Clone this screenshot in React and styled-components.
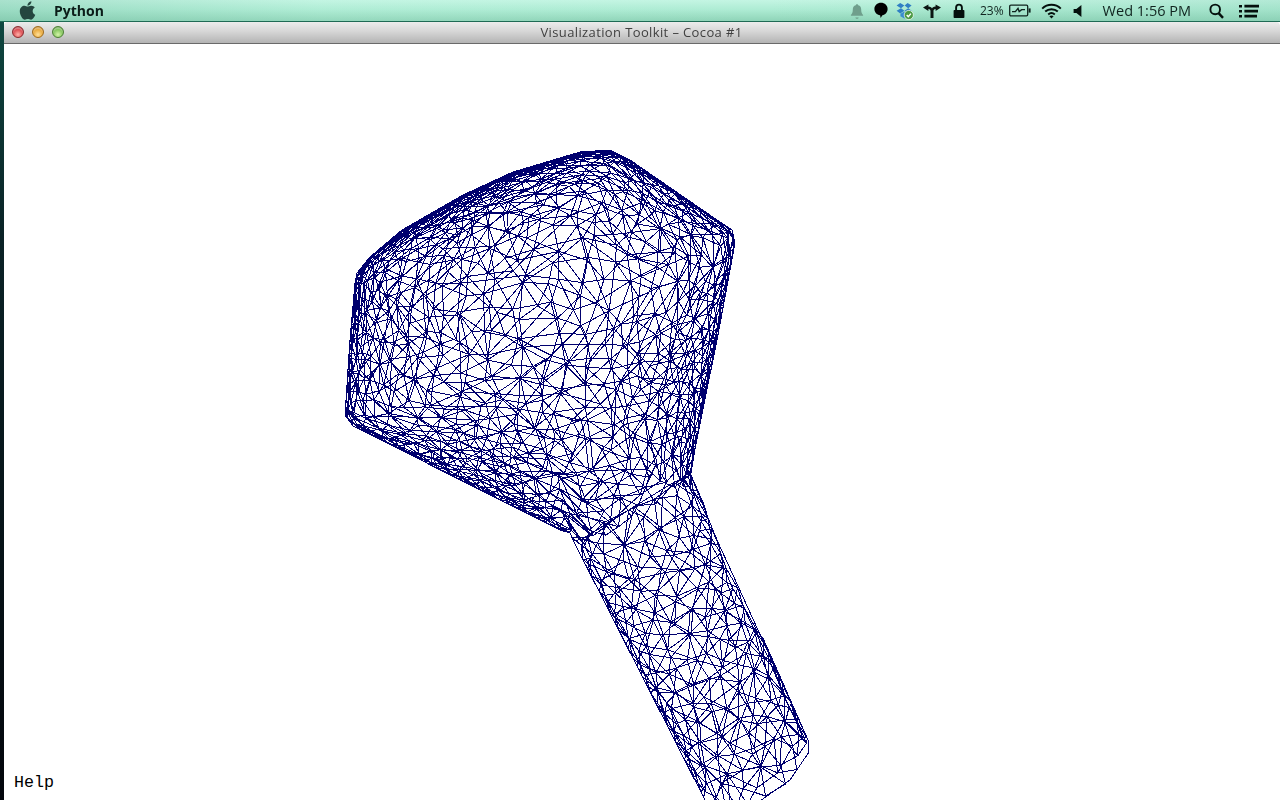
import React, { useMemo } from 'react';
import styled, { createGlobalStyle } from 'styled-components';
import { FaApple } from 'react-icons/fa';

const Global = createGlobalStyle`
  html, body { margin: 0; padding: 0; height: 100%; overflow: hidden; background: #000; }
  #root { height: 100%; }
`;

const Desktop = styled.div`
  width: 1280px; height: 800px; display: flex; flex-direction: column;
  background: linear-gradient(180deg, #0f4a42 0%, #0a2226 30%, #03060c 100%);
  overflow: hidden;
`;

const MenuBar = styled.header`
  flex: 0 0 22px; height: 22px; box-sizing: border-box; display: flex; align-items: center;
  background:
    linear-gradient(90deg, rgba(120,190,165,.35) 0%, rgba(190,245,225,.1) 25%, rgba(190,245,225,0) 60%, rgba(130,200,175,.25) 100%),
    linear-gradient(180deg, #c4f5e3 0%, #aeeCd4 45%, #8fd4b8 100%);
  border-bottom: 1px solid #1f6a55;
  color: #0c1f1a;
`;

const AppleMark = styled.span`
  display: flex; margin-left: 17px; color: #24463f; font-size: 21px; filter: blur(.3px);
`;

const AppName = styled.strong`
  margin-left: 16px; font: 700 14px/21px "Open Sans", sans-serif; color: #0b1c18; filter: blur(.25px);
`;

const Tray = styled.div`
  margin-left: auto; padding-right: 21px; display: flex; align-items: center; height: 21px; filter: blur(.25px);
`;

const TrayIcon = styled.svg`
  display: block; flex: none; margin-left: ${p => p.$gap || 0}px;
`;

const TrayText = styled.span`
  display: block; flex: none; margin-left: ${p => p.$gap || 0}px;
  font: 400 ${p => p.$size}px/21px "Open Sans", sans-serif; color: #10241f; white-space: nowrap;
`;

const Window = styled.main`
  flex: 1; min-height: 0; margin-left: 4px; display: flex; flex-direction: column; background: #fff;
`;

const TitleBar = styled.div`
  flex: 0 0 22px; box-sizing: border-box; position: relative; display: flex; align-items: center; justify-content: center;
  background: linear-gradient(180deg, #ececec 0%, #d6d6d6 45%, #b4b4b4 100%);
  border-bottom: 1px solid #6a6a6a; border-radius: 4px 4px 0 0;
`;

const Lights = styled.div`
  position: absolute; left: 8px; top: 4px; display: flex; gap: 8px;
`;

const Light = styled.span`
  width: 12px; height: 12px; border-radius: 50%; box-sizing: border-box;
  border: 1px solid ${p => p.$rim};
  background: radial-gradient(circle at 50% 75%, ${p => p.$glow} 0%, ${p => p.$base} 60%, ${p => p.$rim} 100%);
  box-shadow: inset 0 2px 1px rgba(255,255,255,.35);
`;

const Title = styled.span`
  margin-left: -1px; font: 400 13px/21px "Open Sans", sans-serif; color: #404040; letter-spacing: .38px; filter: blur(.2px);
`;

const Canvas = styled.div`
  flex: 1; min-height: 0; position: relative; background: #fff; overflow: hidden;
`;

const MeshSvg = styled.svg`
  display: block; width: 1276px; height: 756px;
`;

const Help = styled.span`
  position: absolute; left: 10px; bottom: 8px;
  font: 400 16.66px/18px "Liberation Mono", monospace; color: #000;
`;

const OUTLINE = [
  [610,150],[630,160],[717,220],[732,230],[735,243],[717,340],[690,473],[717,540],[808,740],[809,752],[790,780],[757,803],[730,812],[705,800],
  [573,540],[570,533],[560,530],[353,426],[345,415],[350,340],[355,283],[357,273],[370,257],[402,230],[463,195],[513,172],[580,152],
];

// The head as seen from its pole; the neck is pushed out into the handle so no ring of points crosses it.
const HEAD = [
  [610,150],[630,160],[717,220],[732,230],[735,243],[717,340],[690,473],[700,540],[640,590],[590,570],[570,533],[560,530],[353,426],[345,415],[350,340],[355,283],[357,273],[370,257],[402,230],[463,195],[513,172],[580,152],
];

function mulberry(a) {
  return () => {
    a |= 0; a = (a + 0x6d2b79f5) | 0;
    let t = Math.imul(a ^ (a >>> 15), 1 | a);
    t = (t + Math.imul(t ^ (t >>> 7), 61 | t)) ^ t;
    return ((t ^ (t >>> 14)) >>> 0) / 4294967296;
  };
}

function inside(x, y) {
  let c = false;
  for (let i = 0, j = OUTLINE.length - 1; i < OUTLINE.length; j = i++) {
    const [xi, yi] = OUTLINE[i], [xj, yj] = OUTLINE[j];
    if (yi > y !== yj > y && x < ((xj - xi) * (y - yi)) / (yj - yi) + xi) c = !c;
  }
  return c;
}

function edgeDist(x, y) {
  let best = 1e9;
  for (let i = 0, j = OUTLINE.length - 1; i < OUTLINE.length; j = i++) {
    const [ax, ay] = OUTLINE[j], [bx, by] = OUTLINE[i];
    const dx = bx - ax, dy = by - ay;
    const t = Math.max(0, Math.min(1, ((x - ax) * dx + (y - ay) * dy) / (dx * dx + dy * dy)));
    best = Math.min(best, Math.hypot(x - ax - t * dx, y - ay - t * dy));
  }
  return best;
}

const onShape = (p) => inside(p[0], p[1]) || edgeDist(p[0], p[1]) < 1.2;

// Past this line (through the neck, slightly into the handle) the head mesh stops.
const pastNeck = ([x, y]) => (x - 573) * (473 - 540) - (y - 540) * (690 - 573) < -1800;

// Bowyer-Watson; expects points spread over a few hundred units.
function delaunayEdges(pts) {
  const P = pts.concat([[-20000, -20000], [30000, -20000], [500, 40000]]);
  const n = pts.length;
  const circ = (a, b, c) => {
    const [ax, ay] = P[a], [bx, by] = P[b], [cx, cy] = P[c];
    const d = 2 * (ax * (by - cy) + bx * (cy - ay) + cx * (ay - by));
    const A = ax * ax + ay * ay, B = bx * bx + by * by, C = cx * cx + cy * cy;
    const ux = (A * (by - cy) + B * (cy - ay) + C * (ay - by)) / d;
    const uy = (A * (cx - bx) + B * (ax - cx) + C * (bx - ax)) / d;
    return { a, b, c, ux, uy, r2: (ax - ux) ** 2 + (ay - uy) ** 2 };
  };
  let tris = [circ(n, n + 1, n + 2)];
  for (let i = 0; i < n; i++) {
    const [x, y] = P[i];
    const keep = [], edges = new Map();
    for (const t of tris) {
      if ((x - t.ux) ** 2 + (y - t.uy) ** 2 < t.r2) {
        for (const [u, v] of [[t.a, t.b], [t.b, t.c], [t.c, t.a]]) {
          const k = u < v ? `${u}_${v}` : `${v}_${u}`;
          if (edges.has(k)) edges.set(k, null); else edges.set(k, [u, v]);
        }
      } else keep.push(t);
    }
    for (const e of edges.values()) if (e) keep.push(circ(e[0], e[1], i));
    tris = keep;
  }
  const out = new Map();
  for (const t of tris) {
    if (t.a >= n || t.b >= n || t.c >= n) continue;
    for (const [u, v] of [[t.a, t.b], [t.b, t.c], [t.c, t.a]]) out.set(u < v ? `${u}_${v}` : `${v}_${u}`, [u, v]);
  }
  return [...out.values()];
}

function rayRadius(cx, cy, th) {
  const dx = Math.cos(th), dy = Math.sin(th);
  let best = 1e9;
  for (let i = 0; i < HEAD.length; i++) {
    const a = HEAD[i], b = HEAD[(i + 1) % HEAD.length];
    const ex = b[0] - a[0], ey = b[1] - a[1];
    const den = dx * ey - dy * ex;
    if (Math.abs(den) < 1e-9) continue;
    const t = ((a[0] - cx) * ey - (a[1] - cy) * ex) / den;
    const s = ((a[0] - cx) * dy - (a[1] - cy) * dx) / den;
    if (t > 0 && s >= 0 && s <= 1) best = Math.min(best, t);
  }
  return best;
}

const shoulder = (th) => Math.max(0, Math.cos(th + Math.PI * 0.58)) ** 2;
const neckward = (th) => Math.max(0, Math.cos(th - 1.12)) ** 14;

function headLayer(seed, cx, cy, gap) {
  const r = mulberry(seed);
  const R0 = 300; // flat disc radius
  const flat = [];
  const rimCount = Math.round((2 * Math.PI * R0) / (gap * 0.9));
  for (let i = 0; i < rimCount; i++) {
    const th = ((i + (r() - 0.5) * 0.3) / rimCount) * 2 * Math.PI;
    const rad = R0 - r() * 5; // never exactly cocircular, or the triangulation degenerates
    flat.push([rad * Math.cos(th), rad * Math.sin(th)]);
  }
  for (let i = 0; i < 16000; i++) {
    const x = (r() * 2 - 1) * R0, y = (r() * 2 - 1) * R0;
    const rho = Math.hypot(x, y);
    if (rho > 0.96 * R0) continue;
    const th = Math.atan2(y, x);
    // the upper-left shoulder carries more, finer triangles
    const g = gap * (0.72 + r() * 0.55) * (1 - 0.42 * shoulder(th) * (rho / R0));
    if (flat.every(p => (p[0] - x) ** 2 + (p[1] - y) ** 2 > g * g)) flat.push([x, y]);
  }
  const map = ([x, y]) => {
    const u = Math.min(1, Math.hypot(x, y) / R0);
    const th = Math.atan2(y, x);
    const k = (1.75 + 0.9 * shoulder(th)) * (1 - neckward(th)) + neckward(th);
    const rho = rayRadius(cx, cy, th) * (1 - (1 - u) ** k);
    return [cx + Math.cos(th) * rho, cy + Math.sin(th) * rho];
  };
  const pts = flat.map(map);
  const edges = delaunayEdges(flat).filter(([u, v]) => !pastNeck(pts[u]) && !pastNeck(pts[v]));
  return { pts, edges };
}

function handleLayer(seed, gap) {
  const r = mulberry(seed);
  const W = 205, Len = 345;
  const flat = [];
  const rows = Math.round(Len / (gap * 0.9));
  for (const side of [-1, 1]) {
    for (let i = 0; i <= rows; i++) flat.push([((i + (r() - .5) * .3) / rows) * Len, (side * (W - r() * 4)) / 2]);
  }
  for (let i = 0; i < 9000; i++) {
    const x = r() * Len, y = (r() - 0.5) * W * 0.96;
    const g = gap * (0.72 + r() * 0.55);
    if (flat.every(p => (p[0] - x) ** 2 + (p[1] - y) ** 2 > g * g)) flat.push([x, y]);
  }
  const map = ([x, y]) => {
    const s = (x / Len) * 1.15;
    const t = Math.sin((y / W) * Math.PI);
    const lx = 573 + s * 136, ly = 540 + s * 268;
    const rx = 690 + s * 122, ry = 473 + s * 276;
    return [(lx + rx) / 2 + (t * (rx - lx)) / 2, (ly + ry) / 2 + (t * (ry - ly)) / 2];
  };
  const edges = delaunayEdges(flat).filter(([u, v]) => {
    const a = flat[u], b = flat[v];
    return Math.hypot(a[0] - b[0], a[1] - b[1]) < gap * 2.6;
  });
  return { pts: flat.map(map), edges };
}

function toPath({ pts, edges }) {
  let d = '';
  for (const [u, v] of edges) {
    const a = pts[u], b = pts[v];
    const m = [(a[0] + b[0]) / 2, (a[1] + b[1]) / 2];
    if (!onShape(a) || !onShape(b) || !onShape(m)) continue;
    d += `M${a[0].toFixed(1)} ${a[1].toFixed(1)}L${b[0].toFixed(1)} ${b[1].toFixed(1)}`;
  }
  return d;
}

function Mesh() {
  const path = useMemo(() => {
    const rim = 'M' + OUTLINE.map(p => p.join(' ')).join('L') + 'Z';
    return (
      toPath(headLayer(5, 545, 355, 21)) +
      toPath(headLayer(23, 535, 345, 23)) +
      toPath(handleLayer(7, 21)) +
      toPath(handleLayer(31, 23)) +
      rim
    );
  }, []);
  return (
    <MeshSvg viewBox="4 44 1276 756">
      <path d={path} fill="none" stroke="#00006e" strokeWidth="1" shapeRendering="crispEdges" />
    </MeshSvg>
  );
}

export default function App() {
  return (
    <Desktop>
      <Global />
      <MenuBar>
        <AppleMark><FaApple /></AppleMark>
        <AppName>Python</AppName>
        <Tray>
          <TrayIcon width="14" height="16" viewBox="0 0 14 16">
            <path d="M7 1.2c.7 0 1.2.5 1.2 1.1 2.1.5 3 2.2 3 4.4 0 2.6.6 3.9 1.9 5.2v.8H.9v-.8c1.3-1.3 1.9-2.6 1.9-5.2 0-2.2.9-3.9 3-4.4 0-.6.5-1.1 1.2-1.1zM5.4 14.4h3.2c0 .9-.7 1.4-1.6 1.4s-1.6-.5-1.6-1.4z" fill="#6f9f8c" />
          </TrayIcon>
          <TrayIcon $gap={10} width="14" height="17" viewBox="0 0 14 17">
            <path d="M7 .8c3.7 0 6.6 2.6 6.6 6.1 0 3.3-2.4 5.7-5.2 6.3L6.6 16l-.5-2.8C2.8 12.7.4 10.2.4 6.9.4 3.4 3.3.8 7 .8z" fill="#000" />
          </TrayIcon>
          <TrayIcon $gap={8} width="18" height="18" viewBox="0 0 18 18">
            <path d="M4.2 1 8.4 3.6 5 6.2.6 3.6zM11.6 1 15.6 3.6 12.2 6.2 8.6 3.6zM5 6.2 8.4 8.8 4.2 11.4.6 8.7zM12.2 6.2 15.6 8.7 12 11.4 8.6 8.8z" fill="#2f7fc4" />
            <path d="M4.4 11.8 8.4 9.4l2 1.7v4.2l-2 1.2-4-2.3z" fill="#3a8cd0" />
            <circle cx="12.8" cy="13" r="4.6" fill="#4c9a44" stroke="#e8f6ee" strokeWidth=".8" />
            <path d="M10.7 13l1.6 1.6 2.6-3" fill="none" stroke="#fff" strokeWidth="1.4" />
          </TrayIcon>
          <TrayIcon $gap={9} width="18" height="16" viewBox="0 0 18 16">
            <path d="M0 4.6 5.4 1.4v2.1c2.3.1 3.2 1 3.6 2 .4-1 1.3-1.9 3.6-2V1.4L18 4.6l-5.4 3.3V5.9c-1.6.1-2.1.9-2.1 2.3V15h-3V8.2c0-1.4-.5-2.2-2.1-2.3v2z" fill="#0b1512" />
          </TrayIcon>
          <TrayIcon $gap={12} width="12" height="16" viewBox="0 0 12 16">
            <path d="M3.1 7V4.5C3.1 2.7 4.4 1.6 6 1.6S8.9 2.7 8.9 4.5V7" fill="none" stroke="#05100d" strokeWidth="1.9" />
            <rect x=".6" y="7" width="10.8" height="8" rx=".8" fill="#05100d" />
          </TrayIcon>
          <TrayText $gap={15} $size={12}>23%</TrayText>
          <TrayIcon $gap={5} width="22" height="13" viewBox="0 0 22 13">
            <rect x=".7" y="1.2" width="18" height="10.6" rx="1.2" fill="none" stroke="#10241f" strokeWidth="1.3" />
            <rect x="19.6" y="4.4" width="2" height="4.2" fill="#10241f" />
            <path d="M3 7.6h3.4l2.6-3.2 1.2 3.2 2.4-2h3.4" fill="none" stroke="#10241f" strokeWidth="1.4" />
          </TrayIcon>
          <TrayIcon $gap={10} width="21" height="16" viewBox="0 0 21 16">
            <path d="M1.2 5.6C6.4.6 14.6.6 19.8 5.6M4.2 8.6c3.5-3.2 9.1-3.2 12.6 0M7.2 11.4c1.9-1.6 4.7-1.6 6.6 0" fill="none" stroke="#05100d" strokeWidth="2" />
            <path d="M10.5 15.6 8.4 13.2c1.2-.9 3-.9 4.2 0z" fill="#05100d" />
          </TrayIcon>
          <TrayIcon $gap={11} width="9" height="14" viewBox="0 0 9 14">
            <path d="M8.4 1v12L3.4 9H.6V5h2.8z" fill="#05100d" />
          </TrayIcon>
          <TrayText $gap={21} $size={14.5}>Wed 1:56 PM</TrayText>
          <TrayIcon $gap={18} width="15" height="16" viewBox="0 0 15 16">
            <circle cx="6.2" cy="6.4" r="4.8" fill="none" stroke="#05100d" strokeWidth="1.9" />
            <path d="M9.6 10.2 14 14.8" stroke="#05100d" strokeWidth="2.4" />
          </TrayIcon>
          <TrayIcon $gap={15} width="20" height="14" viewBox="0 0 20 14">
            <path d="M0 1h3v2.4H0zM0 6h3v2.4H0zM0 11h3v2.4H0zM5.4 .8H20v2.8H5.4zM5.4 5.8H19v2.8H5.4zM5.4 10.8H18v2.8H5.4z" fill="#05100d" />
          </TrayIcon>
        </Tray>
      </MenuBar>
      <Window>
        <TitleBar>
          <Lights>
            <Light $rim="#8c2a2e" $base="#d8434a" $glow="#ffb0a8" />
            <Light $rim="#a06a1a" $base="#e6a434" $glow="#ffe09a" />
            <Light $rim="#4c8034" $base="#7cc056" $glow="#d4f4a8" />
          </Lights>
          <Title>Visualization Toolkit – Cocoa #1</Title>
        </TitleBar>
        <Canvas>
          <Mesh />
          <Help>Help</Help>
        </Canvas>
      </Window>
    </Desktop>
  );
}
